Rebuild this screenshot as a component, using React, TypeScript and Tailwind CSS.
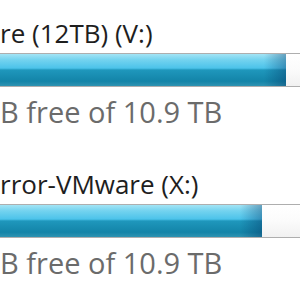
import React from "react";

function Drive({ name, fill, free, gap }: { name: string; fill: number; free: string; gap: string }) {
  return (
    <div className={`flex flex-col ${gap}`}>
      <p className="text-[26px] leading-[30px] text-[#1e1e1e] whitespace-nowrap">{name}</p>
      <div className="mt-[5px] h-[34px] w-[320px] border-y border-[#aeaeae] bg-[linear-gradient(to_bottom,#ffffff_0%,#fbfbfb_50%,#f1f1f1_100%)] flex">
        {/* filled part */}
        <div
          className="relative h-full bg-[linear-gradient(to_bottom,#a3e4f5_0%,#74d3ef_18%,#4cc3ea_44%,#1f97bc_50%,#1384a8_85%,#2e93b2_100%)]"
          style={{ width: fill }}
        >
          <div className="absolute right-0 top-0 h-full w-[22px] bg-[linear-gradient(to_right,rgba(0,40,90,0),rgba(0,40,90,0.35))]" />
        </div>
      </div>
      <p className="mt-[8px] text-[29px] leading-[34px] text-[#6b6b6b] whitespace-nowrap">{free}</p>
    </div>
  );
}

export default function App() {
  return (
    <div className="w-[300px] h-[300px] overflow-hidden bg-white font-['Open_Sans',sans-serif] pt-[18px] flex flex-col">
      <Drive name="re (12TB) (V:)" fill={286} free="B free of 10.9 TB" gap="" />
      <Drive name="rror-VMware (X:)" fill={262} free="B free of 10.9 TB" gap="mt-[40px]" />
    </div>
  );
}
